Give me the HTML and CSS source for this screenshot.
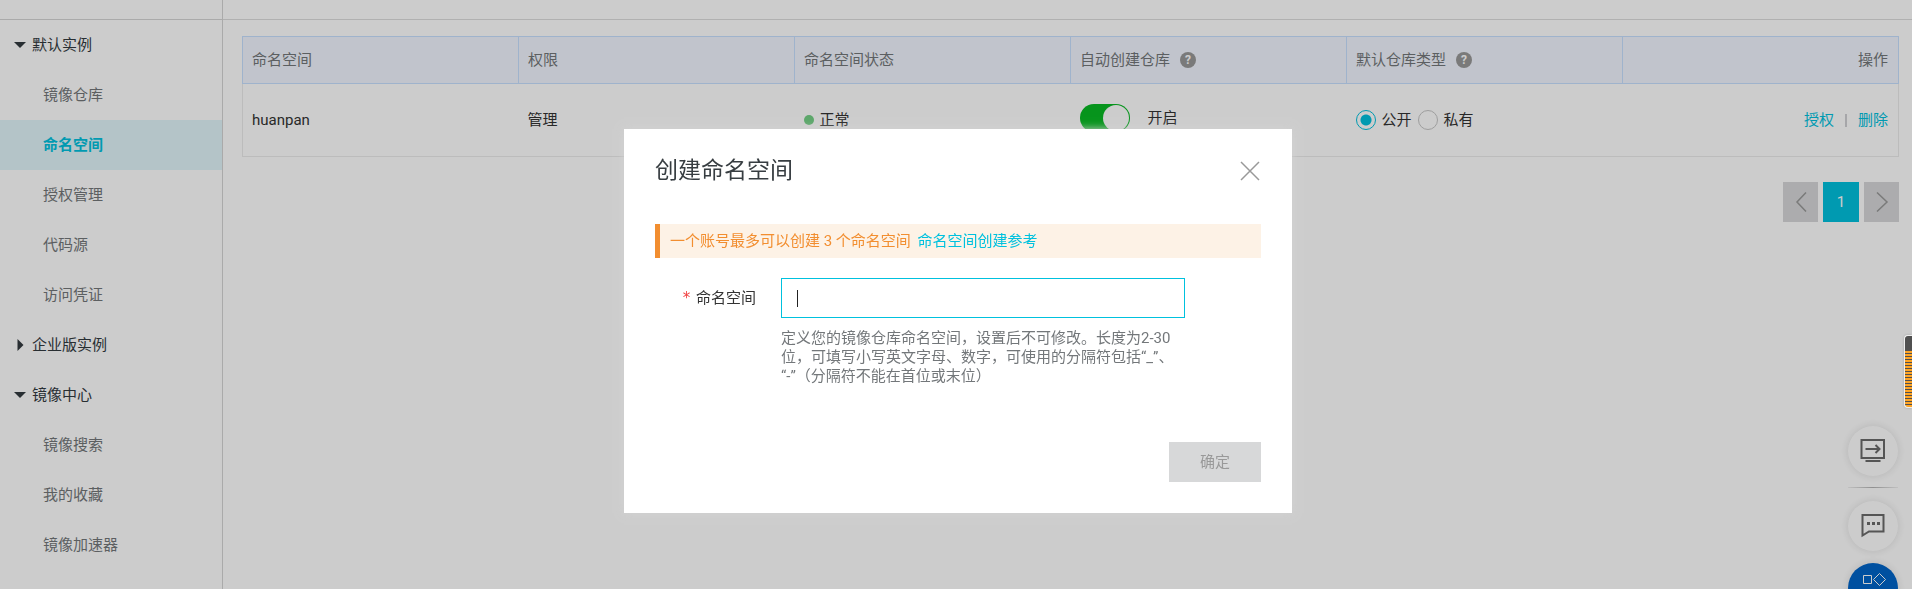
FILE: index.html
```html
<!DOCTYPE html>
<html lang="zh-CN">
<head>
<meta charset="utf-8">
<title>命名空间</title>
<link rel="stylesheet" href="styles.css">
</head>
<body>
<div class="app">
  <header class="topbar"><div class="topbar-side"></div></header>
  <div class="body">
    <nav class="sidebar" aria-label="导航">
      <button class="group" type="button"><svg class="caret" viewBox="0 0 12 12" aria-hidden="true"><path d="M0 3h12L6 9z"/></svg>默认实例</button>
      <a class="item" href="#">镜像仓库</a>
      <a class="item active" href="#">命名空间</a>
      <a class="item" href="#">授权管理</a>
      <a class="item" href="#">代码源</a>
      <a class="item" href="#">访问凭证</a>
      <button class="group" type="button"><svg class="caret" viewBox="0 0 12 12" aria-hidden="true"><path d="M3.500 0v12l6-6z"/></svg>企业版实例</button>
      <button class="group" type="button"><svg class="caret" viewBox="0 0 12 12" aria-hidden="true"><path d="M0 3h12L6 9z"/></svg>镜像中心</button>
      <a class="item" href="#">镜像搜索</a>
      <a class="item" href="#">我的收藏</a>
      <a class="item" href="#">镜像加速器</a>
    </nav>
    <main class="main">
      <table class="table">
        <thead>
          <tr>
            <th>命名空间</th>
            <th>权限</th>
            <th>命名空间状态</th>
            <th><span class="inline">自动创建仓库<span class="help-icon">?</span></span></th>
            <th><span class="inline">默认仓库类型<span class="help-icon">?</span></span></th>
            <th class="right">操作</th>
          </tr>
        </thead>
        <tbody>
          <tr>
            <td>huanpan</td>
            <td>管理</td>
            <td><span class="status">正常</span></td>
            <td><label class="switch"><input type="checkbox" checked>开启</label></td>
            <td>
              <span class="radios">
                <label class="radio"><input type="radio" name="type" checked>公开</label>
                <label class="radio"><input type="radio" name="type">私有</label>
              </span>
            </td>
            <td class="right"><span class="actions"><a href="#">授权</a><span class="sep"></span><a href="#">删除</a></span></td>
          </tr>
        </tbody>
      </table>
      <div class="pager">
        <button type="button" aria-label="上一页"><svg viewBox="0 0 20 20" aria-hidden="true"><path d="M15 0.500L6 10l9 9.500"/></svg></button>
        <button type="button" class="current">1</button>
        <button type="button" aria-label="下一页"><svg viewBox="0 0 20 20" aria-hidden="true"><path d="M5 0.500l10 9.500-10 9.500"/></svg></button>
      </div>
    </main>
  </div>
</div>

<aside class="tools">
  <button class="tool" type="button" aria-label="控制台">
    <svg viewBox="0 0 26 26" aria-hidden="true"><path d="M1.500 2h22.500v18h-22.500zM5.500 23h15M5.500 11h14M15.500 7l4 4-4 4"/></svg>
  </button>
  <div class="tool-line"></div>
  <button class="tool" type="button" aria-label="咨询">
    <svg viewBox="0 0 26 26" aria-hidden="true"><path d="M2.500 2h21v16.500H9L2.500 22.500z"/><path class="fill" d="M7 9h3v3H7zM12 9h3v3h-3zM17 9h3v3h-3z"/></svg>
  </button>
  <button class="tool blue" type="button" aria-label="产品">
    <svg viewBox="0 0 26 26" aria-hidden="true"><path d="M3.500 4.500h8v8h-8zM19.500 2.500l6 6-6 6-6-6z"/></svg>
  </button>
</aside>

<div class="backdrop">
  <section class="dialog" role="dialog" aria-labelledby="dialog-title">
    <div class="dialog-head">
      <h2 id="dialog-title">创建命名空间</h2>
      <button class="close" type="button" aria-label="关闭"><svg viewBox="0 0 20 20" aria-hidden="true"><path d="M1 1l18 18M19 1L1 19"/></svg></button>
    </div>
    <p class="notice">一个账号最多可以创建 3 个命名空间 <a href="#">命名空间创建参考</a></p>
    <form class="form">
      <label for="ns"><span class="star">*</span>命名空间</label>
      <div class="field">
        <div class="input-wrap"><input id="ns" type="text" autocomplete="off"><span class="text-cursor"></span></div>
        <p class="hint">定义您的镜像仓库命名空间，设置后不可修改。长度为2-30位，可填写小写英文字母、数字，可使用的分隔符包括“_”、“-”（分隔符不能在首位或末位）</p>
      </div>
    </form>
    <div class="dialog-foot"><button type="button" disabled>确定</button></div>
  </section>
</div>
<div class="meter"></div>
</body>
</html>
```
FILE: styles.css
```css
* { box-sizing: border-box; }

body {
  margin: 0;
  background: #fff;
  color: #333;
  font: 15px/20px Roboto, "Noto Sans CJK SC", sans-serif;
  overflow: hidden;
}

button, input { font: inherit; color: inherit; margin: 0; }
button { border: 0; padding: 0; background: none; }
a { color: #00c1de; text-decoration: none; }
p, h2 { margin: 0; }

.app { display: flex; flex-direction: column; height: 100vh; }

.topbar { height: 20px; flex: none; border-bottom: 1px solid #dcdcdc; }
.topbar-side { width: 223px; height: 20px; border-right: 1px solid #d5d5d5; border-bottom: 1px solid #d5d5d5; }

.body { display: flex; flex: 1; min-height: 0; }

.sidebar {
  width: 223px;
  flex: none;
  display: flex;
  flex-direction: column;
  border-right: 1px solid #d5d5d5;
}
.group, .item { display: flex; align-items: center; height: 50px; flex: none; }
.group { gap: 6px; padding-left: 14px; color: #333a3f; }
.caret { width: 12px; height: 12px; fill: #333a3f; }
.item { padding-left: 43px; color: #73777a; }
.item.active { background: #e2f6fa; color: #00c1de; font-weight: 700; }

.main { flex: 1; min-width: 0; padding: 16px 13px 0 19px; }

.table { width: 100%; table-layout: fixed; border-collapse: collapse; }
.table th, .table td { padding: 0 10px 0 9px; text-align: left; }
.table th {
  height: 47px;
  background: #f2f6ff;
  border: 1px solid #c7e0ff;
  color: #73777a;
  font-weight: 400;
}
.table td { height: 73px; }
.table tbody tr { border: 1px solid #ebebeb; border-top: 0; }
.table .right { text-align: right; }

.inline { display: flex; align-items: center; gap: 10px; }
.help-icon {
  width: 16px;
  height: 16px;
  border-radius: 8px;
  background: #999;
  color: #fff;
  font-size: 12px;
  font-weight: 700;
  line-height: 16px;
  text-align: center;
}

.status { display: flex; align-items: center; gap: 6px; }
.status::before { content: ""; width: 10px; height: 10px; border-radius: 5px; background: #73d085; }

.switch { display: flex; align-items: center; gap: 18px; padding-bottom: 4px; }
.switch input {
  appearance: none;
  width: 50px;
  height: 28px;
  padding: 1px;
  border-radius: 14px;
  background: #08b923;
  display: flex;
  justify-content: flex-end;
}
.switch input::after { content: ""; width: 26px; height: 26px; border-radius: 13px; background: #fff; }

.radios { display: flex; gap: 6px; }
.radio { display: flex; align-items: center; gap: 6px; }
.radio input {
  appearance: none;
  width: 20px;
  height: 20px;
  border: 1px solid #c6c6c6;
  border-radius: 10px;
}
.radio input:checked {
  border-color: #00c1de;
  background: radial-gradient(circle, #00c1de 5px, #fff0 6px);
}

.actions { display: inline-flex; align-items: center; }
.sep { width: 2px; height: 13px; margin: 0 11px; background: #d0d0d4; }

.pager { display: flex; justify-content: flex-end; gap: 5px; margin-top: 25px; }
.pager button {
  width: 35px;
  height: 40px;
  display: flex;
  align-items: center;
  justify-content: center;
  background: #d7d8da;
}
.pager .current { width: 36px; background: #00c1de; color: #fff; }
.pager svg { width: 20px; height: 20px; fill: none; stroke: #999; stroke-width: 1.5; }

.tools { position: fixed; right: 14px; top: 426px; width: 50px; }
.tool {
  width: 50px;
  height: 50px;
  border-radius: 25px;
  background: #fff;
  box-shadow: 0 0 10px #0000001f;
  display: flex;
  align-items: center;
  justify-content: center;
}
.tool svg { width: 26px; height: 26px; fill: none; stroke: #6b6b6b; stroke-width: 2; }
.tool .fill { fill: #6b6b6b; stroke: none; }
.tool-line { height: 1px; margin: 11px 0 13px; background: linear-gradient(90deg, #f0f0f0, #b4b4b4, #f0f0f0); }
.tool.blue { margin-top: 12px; padding-bottom: 8px; background: #0064c8; }
.tool.blue svg { stroke: #fff; stroke-width: 1; }

.backdrop {
  position: fixed;
  inset: 0;
  display: flex;
  justify-content: center;
  align-items: flex-start;
  padding: 129px 16px 0 20px;
  background: rgba(0, 0, 0, 0.2);
}
.dialog { width: 668px; padding: 31px; background: #fff; box-shadow: 0 0 8px #d2d2d2; }

.dialog-head { display: flex; align-items: center; justify-content: space-between; height: 22px; }
.dialog-head h2 { color: #373d41; font-size: 23px; font-weight: 400; line-height: 22px; }
.close { width: 22px; height: 22px; display: flex; align-items: center; justify-content: center; }
.close svg { width: 20px; height: 20px; fill: none; stroke: #999; stroke-width: 1.5; }

.notice {
  margin-top: 42px;
  padding: 7px 10px;
  border-left: 5px solid #f28e30;
  background: #fdf2e6;
  color: #f28e30;
}
.notice a { margin-left: 3px; }

.form { display: grid; grid-template-columns: 126px 1fr 76px; margin-top: 20px; }
.form label { display: flex; justify-content: flex-end; align-items: center; gap: 5px; height: 40px; padding-right: 25px; }
.star { color: #f04040; font-family: "DejaVu Sans Mono", monospace; }
.input-wrap { position: relative; }
.input-wrap input {
  display: block;
  width: 100%;
  height: 40px;
  padding: 0 16px;
  border: 1px solid #00c1de;
  outline: 0;
  background: #fff;
  caret-color: transparent;
}
.text-cursor { position: absolute; left: 16px; top: 12px; width: 1px; height: 17px; background: #222; }
.hint { margin-top: 11px; color: #73777a; line-height: 19px; text-spacing-trim: space-all; }

.dialog-foot { display: flex; justify-content: flex-end; margin-top: 56px; }
.dialog-foot button { width: 92px; height: 40px; background: #d7d8d9; color: #999; }

.meter {
  position: fixed;
  right: 0;
  top: 335px;
  width: 8px;
  height: 73px;
  border: 1px solid #eee;
  border-right: 0;
  border-radius: 4px 0 0 4px;
  box-shadow: 0 0 3px #0003;
  background:
    linear-gradient(#505050 15px, #fff0 15px),
    repeating-linear-gradient(#ffa526 0 2px, #505050 2px 3px);
}
```
